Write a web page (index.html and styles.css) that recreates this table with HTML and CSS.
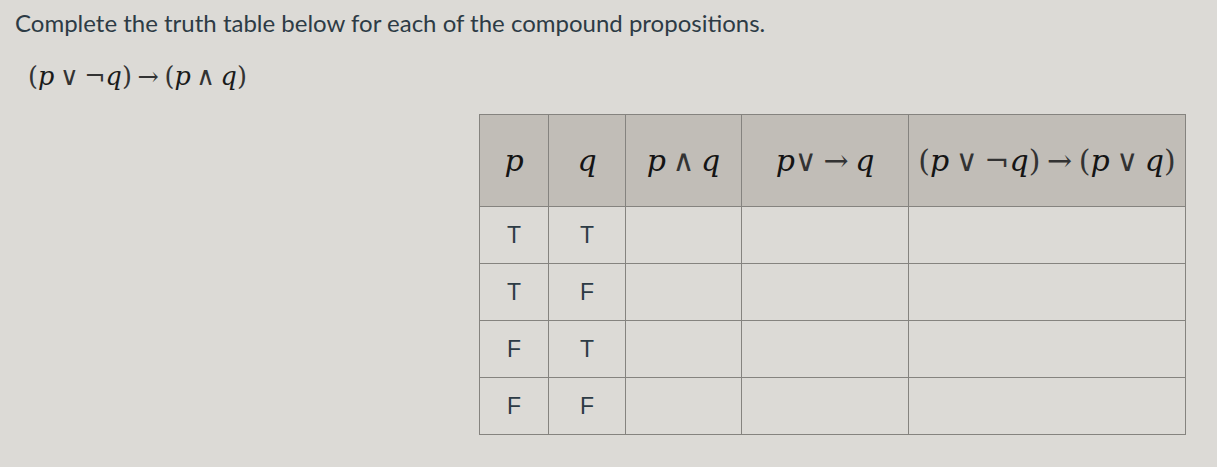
FILE: index.html
```html
<!DOCTYPE html>
<html>
<head>
<meta charset="utf-8">
<link rel="stylesheet" href="styles.css">
</head>
<body>
<div class="page">
  <p class="prompt">Complete the truth table below for each of the compound propositions.</p>
  <p class="formula"><span class="op">(</span><i>p</i><span class="op sp">∨</span><span class="op">¬</span><i>q</i><span class="op">)</span><span class="op sp">→</span><span class="op">(</span><i>p</i><span class="op sp">∧</span><i>q</i><span class="op">)</span></p>
  <table class="truth">
    <colgroup>
      <col class="c1"><col class="c2"><col class="c3"><col class="c4"><col class="c5">
    </colgroup>
    <thead>
      <tr>
        <th><i>p</i></th>
        <th><i>q</i></th>
        <th><i>p</i><span class="op sp">∧</span><i>q</i></th>
        <th><i>p</i><span class="op">∨</span><span class="op sp">→</span><i>q</i></th>
        <th><span class="op">(</span><i>p</i><span class="op sp">∨</span><span class="op">¬</span><i>q</i><span class="op">)</span><span class="op sp">→</span><span class="op">(</span><i>p</i><span class="op sp">∨</span><i>q</i><span class="op">)</span></th>
      </tr>
    </thead>
    <tbody>
      <tr><td>T</td><td>T</td><td></td><td></td><td></td></tr>
      <tr><td>T</td><td>F</td><td></td><td></td><td></td></tr>
      <tr><td>F</td><td>T</td><td></td><td></td><td></td></tr>
      <tr><td>F</td><td>F</td><td></td><td></td><td></td></tr>
    </tbody>
  </table>
</div>
</body>
</html>
```

FILE: styles.css
```css
html, body {
  margin: 0;
  padding: 0;
  background: #dcdad6;
}
.page {
  padding: 9px 0 0 15px;
  font-family: Lato, "Liberation Sans", sans-serif;
  color: #2d3b45;
}
.prompt {
  margin: 0;
  font-size: 24px;
  line-height: 28px;
}
.formula {
  margin: 23px 0 0 13px;
  height: 32px;
  font-family: "DejaVu Serif", serif;
  font-size: 25.5px;
  line-height: 32px;
  color: #1a1a1a;
}
i {
  font-family: "DejaVu Serif", serif;
  font-style: italic;
}
.op {
  font-family: "DejaVu Serif", serif;
  font-style: normal;
  font-weight: 300;
  color: #333;
}
.sp {
  margin: 0 0.22em;
}
.truth {
  margin: 22px 0 0 464px;
  border-collapse: collapse;
  table-layout: fixed;
  width: 707px;
}
.c1 { width: 69px; }
.c2 { width: 77px; }
.c3 { width: 116px; }
.c4 { width: 167px; }
.c5 { width: 277px; }
.truth th, .truth td {
  border: 1px solid #85837f;
  text-align: center;
  padding: 0;
}
.truth th {
  background: #c1bdb7;
  height: 91px;
  font-weight: normal;
  font-family: "DejaVu Serif", serif;
  font-size: 30px;
  line-height: 34px;
  color: #141414;
  white-space: nowrap;
}
.truth td {
  height: 56px;
  font-family: "Liberation Sans", Arial, sans-serif;
  font-size: 23px;
  color: #2d3b45;
}
```
